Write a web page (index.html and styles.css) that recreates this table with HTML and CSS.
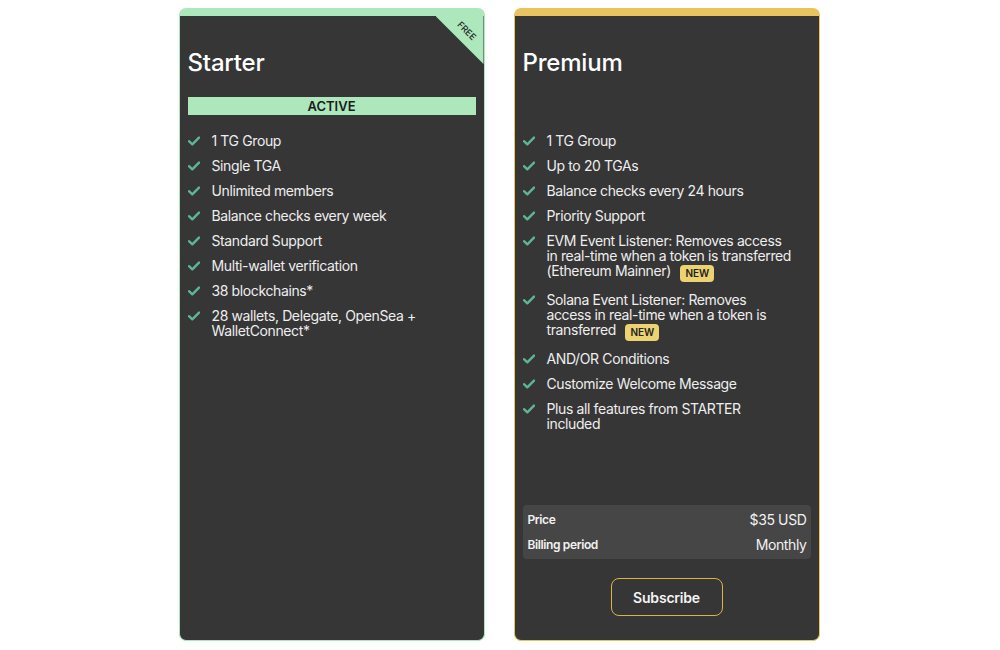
FILE: index.html
```html
<!DOCTYPE html>
<html>
<head>
<meta charset="utf-8">
<link rel="stylesheet" href="styles.css">
</head>
<body>
<div class="plans">
  <div class="card card-starter">
    <div class="ribbon"><span class="ribbon-text">FREE</span></div>
    <h2 class="title">Starter</h2>
    <div class="active">ACTIVE</div>
    <ul class="features">
      <li><svg class="check" viewBox="0 0 12 10"><path d="M1 5.2 4.3 8.3 11 1.6"/></svg><span>1 TG Group</span></li>
      <li><svg class="check" viewBox="0 0 12 10"><path d="M1 5.2 4.3 8.3 11 1.6"/></svg><span>Single TGA</span></li>
      <li><svg class="check" viewBox="0 0 12 10"><path d="M1 5.2 4.3 8.3 11 1.6"/></svg><span>Unlimited members</span></li>
      <li><svg class="check" viewBox="0 0 12 10"><path d="M1 5.2 4.3 8.3 11 1.6"/></svg><span>Balance checks every week</span></li>
      <li><svg class="check" viewBox="0 0 12 10"><path d="M1 5.2 4.3 8.3 11 1.6"/></svg><span>Standard Support</span></li>
      <li><svg class="check" viewBox="0 0 12 10"><path d="M1 5.2 4.3 8.3 11 1.6"/></svg><span>Multi-wallet verification</span></li>
      <li><svg class="check" viewBox="0 0 12 10"><path d="M1 5.2 4.3 8.3 11 1.6"/></svg><span>38 blockchains*</span></li>
      <li><svg class="check" viewBox="0 0 12 10"><path d="M1 5.2 4.3 8.3 11 1.6"/></svg><span>28 wallets, Delegate, OpenSea + WalletConnect*</span></li>
    </ul>
  </div>
  <div class="card card-premium">
    <h2 class="title">Premium</h2>
    <div class="spacer"></div>
    <ul class="features">
      <li><svg class="check" viewBox="0 0 12 10"><path d="M1 5.2 4.3 8.3 11 1.6"/></svg><span>1 TG Group</span></li>
      <li><svg class="check" viewBox="0 0 12 10"><path d="M1 5.2 4.3 8.3 11 1.6"/></svg><span>Up to 20 TGAs</span></li>
      <li><svg class="check" viewBox="0 0 12 10"><path d="M1 5.2 4.3 8.3 11 1.6"/></svg><span>Balance checks every 24 hours</span></li>
      <li><svg class="check" viewBox="0 0 12 10"><path d="M1 5.2 4.3 8.3 11 1.6"/></svg><span>Priority Support</span></li>
      <li><svg class="check" viewBox="0 0 12 10"><path d="M1 5.2 4.3 8.3 11 1.6"/></svg><span>EVM Event Listener: Removes access in real-time when a token is transferred (Ethereum Mainner) <span class="badge">NEW</span></span></li>
      <li><svg class="check" viewBox="0 0 12 10"><path d="M1 5.2 4.3 8.3 11 1.6"/></svg><span>Solana Event Listener: Removes access in real-time when a token is transferred <span class="badge">NEW</span></span></li>
      <li><svg class="check" viewBox="0 0 12 10"><path d="M1 5.2 4.3 8.3 11 1.6"/></svg><span>AND/OR Conditions</span></li>
      <li><svg class="check" viewBox="0 0 12 10"><path d="M1 5.2 4.3 8.3 11 1.6"/></svg><span>Customize Welcome Message</span></li>
      <li><svg class="check" viewBox="0 0 12 10"><path d="M1 5.2 4.3 8.3 11 1.6"/></svg><span>Plus all features from STARTER included</span></li>
    </ul>
    <div class="footer">
      <div class="pricebox">
        <div class="row"><span class="label">Price</span><span class="value">$35 USD</span></div>
        <div class="row"><span class="label">Billing period</span><span class="value">Monthly</span></div>
      </div>
      <button class="subscribe">Subscribe</button>
    </div>
  </div>
</div>
</body>
</html>
```
FILE: styles.css
```css
* { box-sizing: border-box; }
html, body { margin: 0; padding: 0; background: #ffffff; }
body { font-family: Inter, "Noto Sans", sans-serif; color: #f2f2f2; letter-spacing: -0.38px; }

.plans {
  display: flex;
  justify-content: center;
  gap: 29px;
  padding-top: 8px;
  padding-right: 2px;
}

.card {
  position: relative;
  width: 306px;
  height: 633px;
  background: #363636;
  border: 1px solid;
  border-top-width: 8px;
  border-radius: 7px;
  padding: 0 8px 24px 8px;
  display: flex;
  flex-direction: column;
}
.card-starter { border-color: #ace8bc; }
.card-premium { border-color: #e8c360; }

.ribbon {
  position: absolute;
  top: 0;
  right: 0;
  width: 48px;
  height: 48px;
  background: #ace8bc;
  clip-path: polygon(0 0, 100% 0, 100% 100%);
}
.ribbon-text {
  position: absolute;
  top: 9px;
  right: -3px;
  width: 40px;
  text-align: center;
  font-size: 9px;
  font-weight: 500;
  color: #1d1d1d;
  transform: rotate(45deg);
  letter-spacing: 0;
}

.title {
  margin: 33px 0 0 0;
  font-size: 24px;
  line-height: 28px;
  font-weight: 500;
  color: #ffffff;
  letter-spacing: -0.2px;
}

.active {
  margin-top: 20px;
  height: 18px;
  background: #ace8bc;
  color: #1b1b1b;
  font-size: 13px;
  font-weight: 600;
  line-height: 19px;
  text-align: center;
  letter-spacing: 0;
}
.spacer { margin-top: 20px; height: 18px; }

.features {
  list-style: none;
  margin: 18px 0 0 0;
  padding: 0;
  display: flex;
  flex-direction: column;
  gap: 10px;
}
.features li {
  display: flex;
  align-items: flex-start;
  font-size: 14px;
  line-height: 15px;
  color: #eeeeee;
  padding-right: 17px;
}
.check {
  flex: none;
  width: 12px;
  height: 10px;
  margin: 3px 12px 0 0;
  fill: none;
  stroke: #5fb594;
  stroke-width: 2.4;
  stroke-linecap: round;
  stroke-linejoin: round;
}
.badge {
  display: inline-block;
  margin: 2px 0 0 6px;
  padding: 0 5px;
  height: 17px;
  line-height: 17px;
  border-radius: 4px;
  background: #ecd270;
  color: #222;
  font-size: 10px;
  font-weight: 600;
  vertical-align: middle;
  letter-spacing: 0;
}

.footer {
  margin-top: auto;
  display: flex;
  flex-direction: column;
  align-items: center;
}
.pricebox {
  align-self: stretch;
  background: #464646;
  border-radius: 4px;
  padding: 2px 4px 2px 5px;
}
.row {
  display: flex;
  justify-content: space-between;
  align-items: center;
  height: 25px;
}
.label { font-size: 12px; font-weight: 600; color: #f2f2f2; }
.value { font-size: 14px; color: #f2f2f2; }

.subscribe {
  margin-top: 19px;
  width: 112px;
  height: 38px;
  background: transparent;
  border: 1px solid #d9b34e;
  border-radius: 8px;
  color: #f4f4f4;
  font-family: Inter, "Noto Sans", sans-serif;
  font-size: 14px;
  font-weight: 600;
  letter-spacing: -0.2px;
}
```
